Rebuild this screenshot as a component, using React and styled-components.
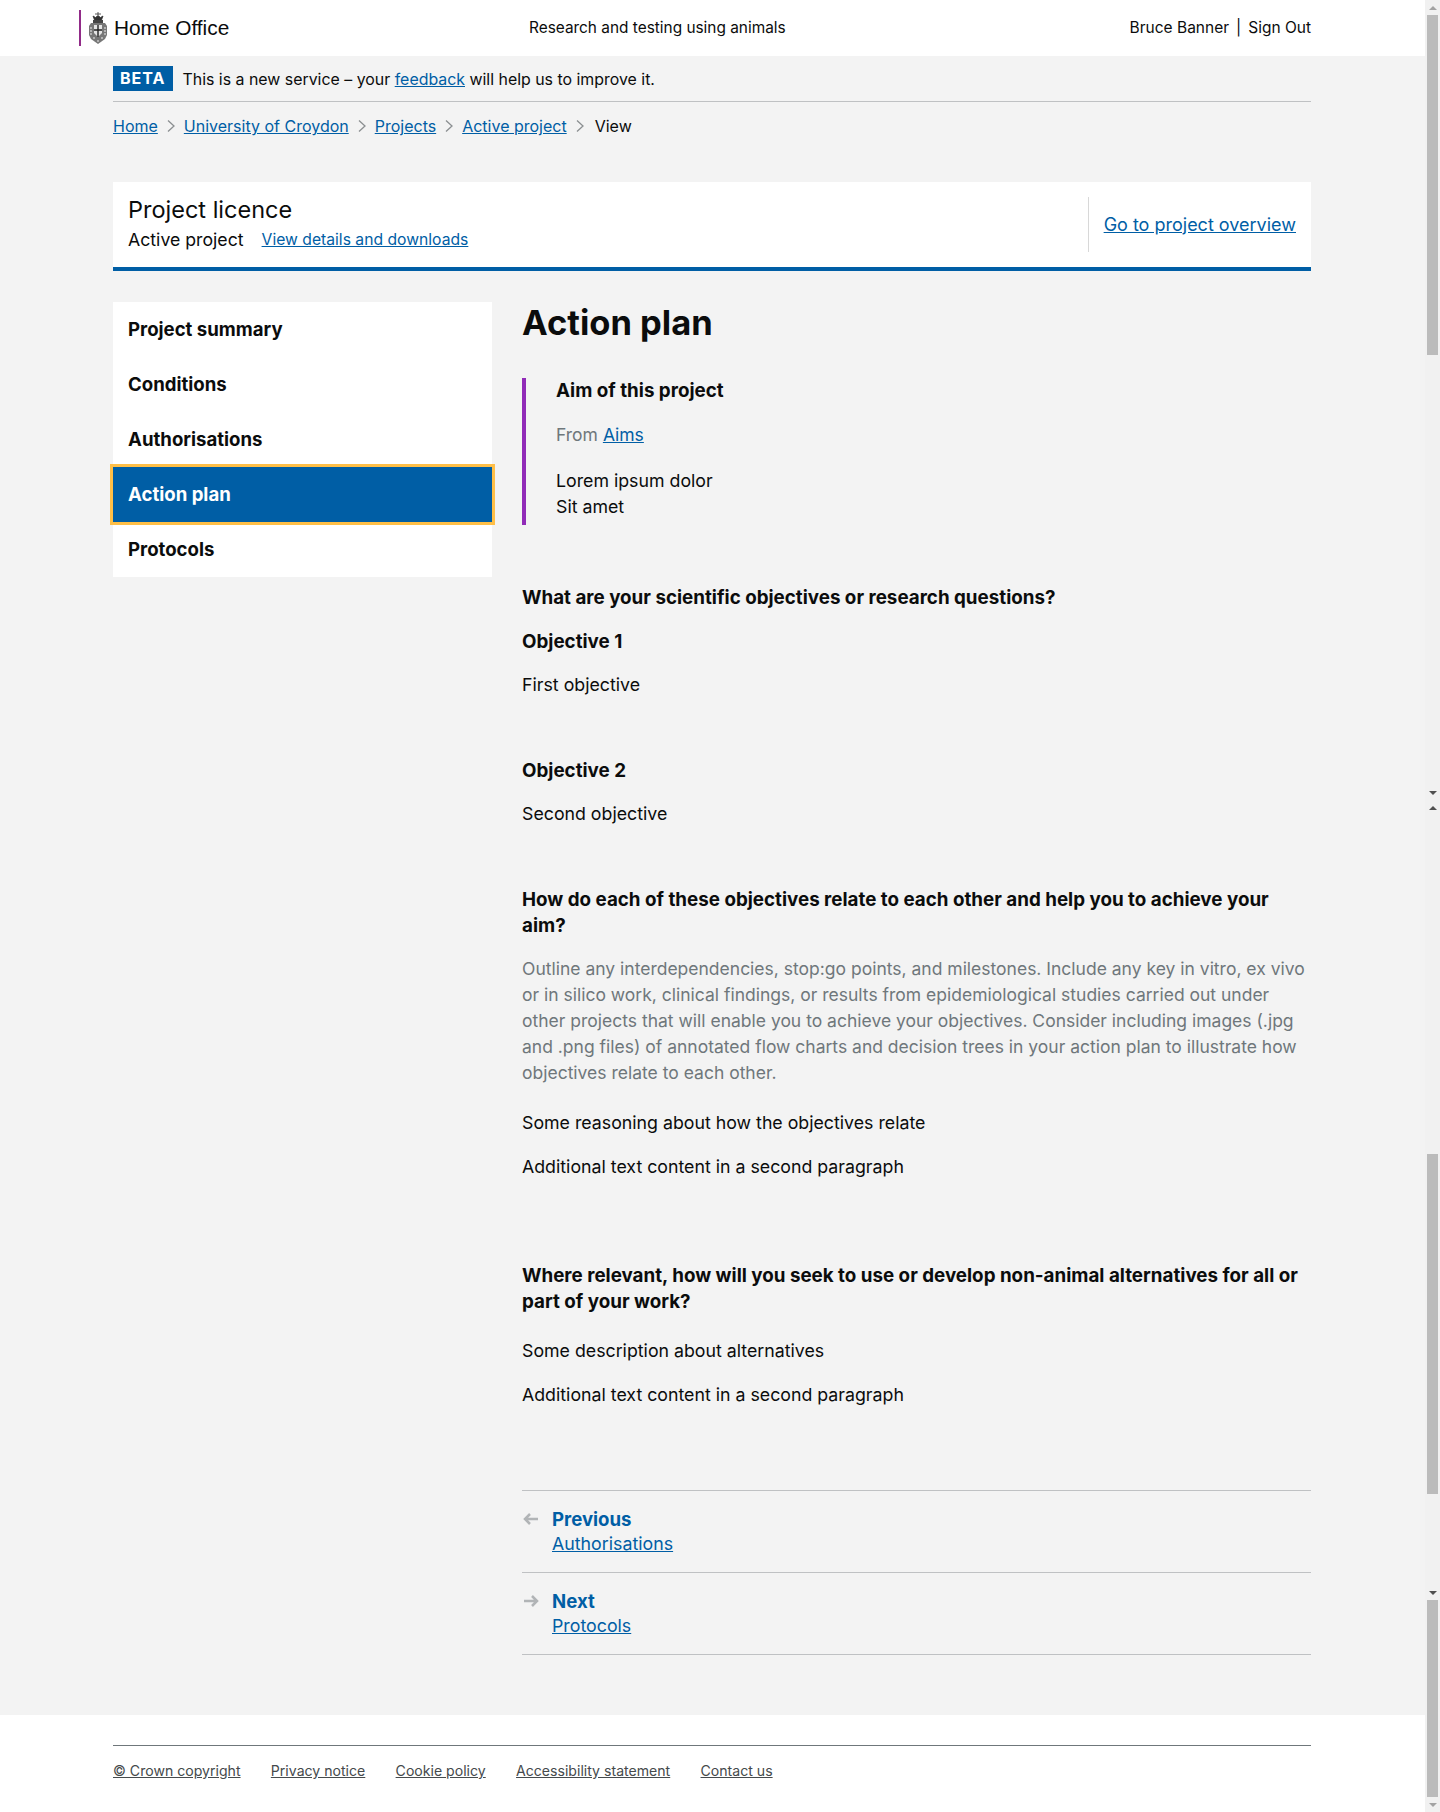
import React from "react";
import styled, { createGlobalStyle } from "styled-components";

const GlobalStyle = createGlobalStyle`
  html, body {
    margin: 0;
    padding: 0;
    background: #f3f3f3;
    overflow: hidden;
  }
  body {
    font-family: Inter, "Noto Sans", sans-serif;
    font-size: 16px;
    line-height: 26px;
    color: #0b0c0c;
  }
  * { box-sizing: border-box; }
  a { color: #005ea5; }
`;

const Frame = styled.div`
  display: flex;
  width: 1440px;
  height: 1812px;
  overflow: hidden;
`;

const Page = styled.div`
  width: 1425px;
  display: flex;
  flex-direction: column;
`;

// Scrollbar strip, as it appears in the picture
const Scrollbar = styled.div`
  width: 15px;
  height: 1812px;
  background: #f1f1f1;
  display: flex;
  flex-direction: column;
  align-items: center;
`;

const Thumb = styled.div`
  width: 11px;
  height: ${p => p.$h}px;
  background: #bbb;
  flex: none;
`;

const Gap = styled.div`
  height: ${p => p.$h}px;
  flex: none;
  display: flex;
  align-items: center;
  justify-content: center;
`;

const Arrow = styled.div`
  width: 0;
  height: 0;
  border-left: 4px solid transparent;
  border-right: 4px solid transparent;
  ${p => p.$up
    ? `border-bottom: 4px solid ${p.$c};`
    : `border-top: 4px solid ${p.$c};`}
`;

const Header = styled.header`
  height: 56px;
  background: #fff;
  display: flex;
  align-items: center;
  padding: 0 114px 0 79px;
`;

const Logo = styled.div`
  width: 450px;
  display: flex;
  align-items: center;
  height: 36px;
  border-left: 2px solid #912b88;
  padding-left: 7px;
  font-family: "Liberation Sans", Arial, sans-serif;
  font-size: 20.8px;
  gap: 6px;
`;

const ServiceName = styled.div`
  flex: 1;
  font-size: 15.4px;
  margin-bottom: 1px;
`;

const UserNav = styled.div`
  display: flex;
  gap: 7px;
  font-size: 15.5px;
  margin-bottom: 1px;
`;

const Container = styled.div`
  padding: 0 114px 0 113px;
`;

const PhaseBanner = styled.div`
  display: flex;
  align-items: flex-start;
  padding: 10px 0;
  height: 46px;
  border-bottom: 1px solid #bfc1c3;
  font-size: 15.9px;
`;

const Tag = styled.strong`
  background: #005ea5;
  color: #fff;
  font-size: 16px;
  font-weight: 700;
  letter-spacing: 1px;
  height: 25px;
  line-height: 25px;
  padding: 0 7px;
  margin-right: 10px;
`;

const PhaseText = styled.span`
  margin-top: 1px;
`;

const Breadcrumbs = styled.nav`
  display: flex;
  align-items: center;
  height: 48px;
  margin-bottom: 32px;
`;

const Crumb = styled.svg`
  margin: 0 8px;
  flex: none;
`;

const CurrentCrumb = styled.span`
  margin-left: 2px;
`;

const PanelHeader = styled.div`
  display: flex;
  background: #fff;
  height: 89px;
  border-bottom: 4px solid #005ea5;
  padding: 15px;
  justify-content: space-between;
`;

const PanelTitle = styled.div`
  font-size: 23.5px;
  line-height: 26px;
`;

const PanelSub = styled.div`
  display: flex;
  gap: 18px;
  margin-top: 4px;
  font-size: 17.7px;
  a { font-size: 15.7px; }
`;

const OverviewLink = styled.div`
  border-left: 1px solid #d8d8d8;
  padding-left: 15px;
  display: flex;
  align-items: center;
  font-size: 18px;
  height: 55px;
`;

const Layout = styled.div`
  display: grid;
  grid-template-columns: 379px 1fr;
  gap: 30px;
  margin-top: 31px;
`;

const SideNav = styled.nav`
  align-self: start;
  background: #fff;
  display: flex;
  flex-direction: column;
`;

const NavItem = styled.div`
  height: 55px;
  padding: 0 15px 2px;
  display: flex;
  align-items: center;
  font-size: 18.6px;
  font-weight: 700;
  position: relative;
  ${p => p.$active && `
    background: #005ea5;
    color: #fff;
    outline: 3px solid #ffbf47;
  `}
`;

const Content = styled.main`
  display: flex;
  flex-direction: column;
`;

const Title = styled.h1`
  margin: 1px 0 0;
  font-size: 34.5px;
  line-height: 40px;
  font-weight: 700;
`;

const Quote = styled.div`
  margin-top: 35px;
  border-left: 4px solid #912bb8;
  padding-left: 30px;
  height: 147px;
`;

const Heading = styled.h3`
  margin: ${p => p.$top || 0}px 0 0;
  font-size: 18.8px;
  line-height: 26px;
  font-weight: 700;
`;

const Para = styled.p`
  margin: ${p => p.$top || 0}px 0 0;
  color: ${p => (p.$muted ? "#6f777b" : "inherit")};
  font-size: ${p => (p.$muted ? "17.5px" : "17.75px")};
`;

const Section = styled.div`
  margin-top: ${p => p.$top}px;
`;

const Pager = styled.div`
  margin-top: 82px;
  border-top: 1px solid #bfc1c3;
`;

const PagerRow = styled.div`
  display: flex;
  height: 82px;
  border-bottom: 1px solid #bfc1c3;
  padding-top: 15px;
`;

const PagerIcon = styled.svg`
  width: 30px;
  margin-top: 5px;
  flex: none;
`;

const PagerLabel = styled.div`
  font-size: 18.6px;
  font-weight: 700;
  color: #005ea5;
`;

const PagerLink = styled.a`
  font-size: 17.8px;
  display: block;
  margin-top: -1px;
`;

const Footer = styled.footer`
  margin-top: 60px;
  flex: 1;
  background: #fff;
  padding: 30px 114px 0 113px;
`;

const FooterLinks = styled.div`
  border-top: 1px solid #6f777b;
  padding-top: 12px;
  display: flex;
  gap: 30.3px;
  font-size: 14.1px;
  a { color: #454a4c; }
`;

const Chevron = () => (
  <Crumb width="10" height="14" viewBox="0 0 10 14">
    <path d="M2 1.5 L8 7 L2 12.5" fill="none" stroke="#8b8f91" strokeWidth="1.3" />
  </Crumb>
);

const PagerArrow = ({ next }) => (
  <PagerIcon height="16" viewBox="0 0 30 16">
    <path
      d={next ? "M2 8 H15 M10 3 L15 8 L10 13" : "M16 8 H3 M8 3 L3 8 L8 13"}
      fill="none"
      stroke="#b1b4b6"
      strokeWidth="2.5"
    />
  </PagerIcon>
);

// Royal crest, drawn roughly
const Crest = () => (
  <svg width="20" height="34" viewBox="0 0 20 34">
    <path d="M10 1v3M7 3h6M5 5l1.500 4h7L15 5l-2.500 1.500L10 4.500 7.500 6.500z" fill="#333" stroke="#333" strokeWidth="0.8" />
    <rect x="5" y="9" width="10" height="3" fill="#444" />
    <path d="M3 12h14l2 3v9l-2 4-7 5-7-5-2-4v-9z" fill="#777" />
    <path d="M6 14h8v8l-4 4-4-4z" fill="#e4e4e4" />
    <path d="M10 14v12M6 19h8" stroke="#222" strokeWidth="1.4" />
    <path d="M2 17h2M2 20h2M2 23h2M16 17h2M16 20h2M16 23h2M5 27h2M13 27h2M9 30h2" stroke="#eee" strokeWidth="1" />
  </svg>
);

const links = ["© Crown copyright", "Privacy notice", "Cookie policy", "Accessibility statement", "Contact us"];
const navItems = ["Project summary", "Conditions", "Authorisations", "Action plan", "Protocols"];

export default function App() {
  return (
    <Frame>
      <GlobalStyle />
      <Page>
        <Header>
          <Logo>
            <Crest />
            Home Office
          </Logo>
          <ServiceName>Research and testing using animals</ServiceName>
          <UserNav>
            <span>Bruce Banner</span>
            <span>|</span>
            <span>Sign Out</span>
          </UserNav>
        </Header>
        <Container>
          <PhaseBanner>
            <Tag>BETA</Tag>
            <PhaseText>
              This is a new service – your <a href="#">feedback</a> will help us to improve it.
            </PhaseText>
          </PhaseBanner>
          <Breadcrumbs>
            <a href="#">Home</a>
            <Chevron />
            <a href="#">University of Croydon</a>
            <Chevron />
            <a href="#">Projects</a>
            <Chevron />
            <a href="#">Active project</a>
            <Chevron />
            <CurrentCrumb>View</CurrentCrumb>
          </Breadcrumbs>
          <PanelHeader>
            <div>
              <PanelTitle>Project licence</PanelTitle>
              <PanelSub>
                <span>Active project</span>
                <a href="#">View details and downloads</a>
              </PanelSub>
            </div>
            <OverviewLink>
              <a href="#">Go to project overview</a>
            </OverviewLink>
          </PanelHeader>
          <Layout>
            <SideNav>
              {navItems.map(item => (
                <NavItem key={item} $active={item === "Action plan"}>{item}</NavItem>
              ))}
            </SideNav>
            <Content>
              <Title>Action plan</Title>
              <Quote>
                <Heading>Aim of this project</Heading>
                <Para $top={18} $muted>From <a href="#">Aims</a></Para>
                <Para $top={20}>Lorem ipsum dolor<br />Sit amet</Para>
              </Quote>
              <Section $top={60}>
                <Heading>What are your scientific objectives or research questions?</Heading>
                <Heading $top={18}>Objective 1</Heading>
                <Para $top={17}>First objective</Para>
                <Heading $top={60}>Objective 2</Heading>
                <Para $top={17}>Second objective</Para>
              </Section>
              <Section $top={60}>
                <Heading>How do each of these objectives relate to each other and help you to achieve your aim?</Heading>
                <Para $top={17} $muted>
                  Outline any interdependencies, stop:go points, and milestones. Include any key in vitro, ex vivo
                  or in silico work, clinical findings, or results from epidemiological studies carried out under
                  other projects that will enable you to achieve your objectives. Consider including images (.jpg
                  and .png files) of annotated flow charts and decision trees in your action plan to illustrate how
                  objectives relate to each other.
                </Para>
                <Para $top={24}>Some reasoning about how the objectives relate</Para>
                <Para $top={18}>Additional text content in a second paragraph</Para>
              </Section>
              <Section $top={83}>
                <Heading>Where relevant, how will you seek to use or develop non-animal alternatives for all or part of your work?</Heading>
                <Para $top={23}>Some description about alternatives</Para>
                <Para $top={18}>Additional text content in a second paragraph</Para>
              </Section>
              <Pager>
                <PagerRow>
                  <PagerArrow />
                  <div>
                    <PagerLabel>Previous</PagerLabel>
                    <PagerLink href="#">Authorisations</PagerLink>
                  </div>
                </PagerRow>
                <PagerRow>
                  <PagerArrow next />
                  <div>
                    <PagerLabel>Next</PagerLabel>
                    <PagerLink href="#">Protocols</PagerLink>
                  </div>
                </PagerRow>
              </Pager>
            </Content>
          </Layout>
        </Container>
        <Footer>
          <FooterLinks>
            {links.map(l => <a href="#" key={l}>{l}</a>)}
          </FooterLinks>
        </Footer>
      </Page>
      <Scrollbar>
        <Gap $h={15}><Arrow $up $c="#a3a3a3" /></Gap>
        <Thumb $h={340} />
        <Gap $h={430} />
        <Gap $h={15}><Arrow $c="#505050" /></Gap>
        <Gap $h={16}><Arrow $up $c="#505050" /></Gap>
        <Gap $h={338} />
        <Thumb $h={340} />
        <Gap $h={91} />
        <Gap $h={15}><Arrow $c="#505050" /></Gap>
        <Thumb $h={197} />
        <Gap $h={15}><Arrow $c="#a3a3a3" /></Gap>
      </Scrollbar>
    </Frame>
  );
}
